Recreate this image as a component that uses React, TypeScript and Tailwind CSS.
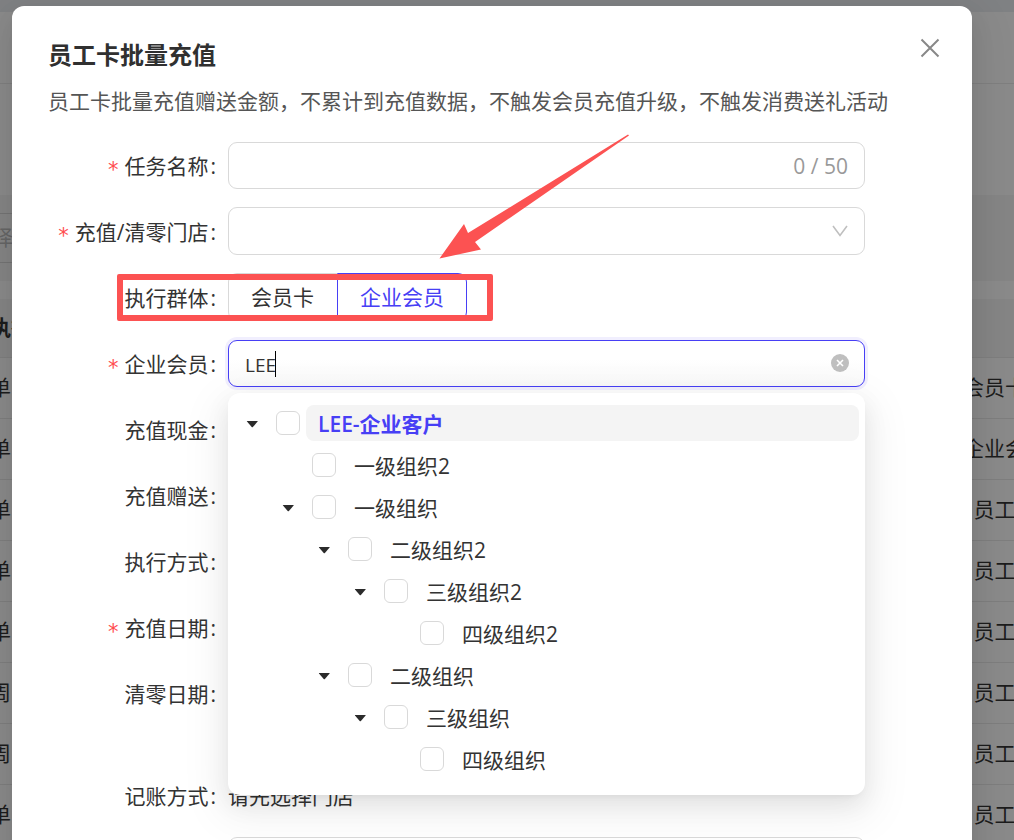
import { useState } from "react";
import type { ReactNode } from "react";

const tableRows = [
  { left: "单", right: "会员卡类" },
  { left: "单", right: "企业会员" },
  { left: "单", right: "员工卡" },
  { left: "单", right: "员工卡" },
  { left: "单", right: "员工卡" },
  { left: "周", right: "员工卡" },
  { left: "周", right: "员工卡" },
  { left: "单", right: "员工卡" },
];

const tree = [
  { label: "LEE-企业客户", level: 0, open: true, match: true },
  { label: "一级组织2", level: 1, open: false },
  { label: "一级组织", level: 1, open: true },
  { label: "二级组织2", level: 2, open: true },
  { label: "三级组织2", level: 3, open: true },
  { label: "四级组织2", level: 4, open: false },
  { label: "二级组织", level: 2, open: true },
  { label: "三级组织", level: 3, open: true },
  { label: "四级组织", level: 4, open: false },
];

const indents = ["pl-0", "pl-9", "pl-18", "pl-27", "pl-36"];

function Backdrop() {
  return (
    <div className="absolute inset-0 overflow-hidden bg-[#8a8a8a] text-[21px] text-[#1c1c1c]">
      <div className="h-3 bg-[#7f8183]" />
      <div className="h-[72px] border-b border-[#7f7f7f]" />
      <div className="h-[111px]" />
      <div className="h-[86px] bg-[#858585] pt-[18px]">
        <div className="flex h-[50px] w-24 items-center border-y border-[#747474] text-[#666]">
          <span className="-ml-2">择</span>
        </div>
      </div>
      <div className="h-[18px]" />
      <table className="w-full table-fixed border-collapse">
        <thead>
          <tr className="h-[58px] border-b border-[#7e7e7e] bg-[#858585]">
            <th className="w-24 text-left font-bold">
              <span className="-ml-2.5">执行</span>
            </th>
            <th />
            <th className="w-[18px]" />
          </tr>
        </thead>
        <tbody>
          {tableRows.map((row, i) => (
            <tr key={i} className="h-[61px] border-b border-[#7e7e7e]">
              <td className="w-24">
                <span className="-ml-2.5">{row.left}</span>
              </td>
              <td />
              <td className="w-[18px]">
                <div className="-mx-12 text-center whitespace-nowrap">{row.right}</div>
              </td>
            </tr>
          ))}
        </tbody>
      </table>
    </div>
  );
}

function Row({ label, required, id, tall, children }: { label: string; required?: boolean; id?: string; tall?: boolean; children?: ReactNode }) {
  return (
    <div className={`flex ${tall ? "h-21" : "h-12"}`}>
      <label htmlFor={id} className="flex h-12 w-45 shrink-0 items-center justify-end pt-0.5 pr-3 whitespace-nowrap">
        {required && <span className="mr-1.5 pt-2 font-['DejaVu_Sans'] text-[#ff4d4f]">*</span>}
        {label}
        <span className="ml-0.5">:</span>
      </label>
      <div className="relative flex h-12 min-w-0 flex-1 items-end">{children}</div>
    </div>
  );
}

function TreePanel() {
  return (
    <ul className="absolute inset-x-0 top-[54px] z-10 flex flex-col gap-1.5 rounded-xl bg-white px-1.5 pt-3 pb-[18px] shadow-[0_9px_24px_rgba(0,0,0,0.08),0_4px_9px_-6px_rgba(0,0,0,0.12),0_14px_42px_12px_rgba(0,0,0,0.05)]">
      {tree.map((node, i) => (
        <li key={i} className={`flex h-9 items-center ${indents[node.level]}`}>
          {node.open ? (
            <button type="button" aria-label="展开" className="flex w-9 shrink-0 justify-center pt-0.5">
              <svg width="12" height="8" viewBox="0 0 12 8" className="fill-[#2b2b2b]">
                <path d="M1.2 1h10.200q.6 0 .2.6L6.900 7q-.6.600-1.200 0L1 1.600Q.6 1 1.200 1z" />
              </svg>
            </button>
          ) : (
            <span className="w-9 shrink-0" />
          )}
          <input
            id={`node-${i}`}
            type="checkbox"
            className="ml-1.5 size-6 shrink-0 appearance-none rounded-md border border-[#d9d9d9] bg-white"
          />
          <label
            htmlFor={`node-${i}`}
            className={`ml-1.5 flex h-9 flex-1 items-center rounded-lg px-3 pt-0.5 ${node.match ? "bg-[#f4f4f4] font-semibold text-[#473ff5]" : ""}`}
          >
            {node.label}
          </label>
        </li>
      ))}
    </ul>
  );
}

export default function App() {
  const [name, setName] = useState("");
  const [member, setMember] = useState("LEE");
  const box = "w-full rounded-[9px] border border-[#d9d9d9] bg-white px-4 outline-none";
  return (
    <div className="relative h-screen overflow-hidden font-['Open_Sans','Noto_Sans_CJK_SC',sans-serif]">
      <Backdrop />
      <div className="relative pt-1.5 pr-[42px] pl-3">
        <main className="relative min-h-screen rounded-xl bg-white px-9 pt-[31px] text-[21px] leading-8 text-[#333] shadow-[0_9px_24px_rgba(0,0,0,0.08),0_4px_9px_-6px_rgba(0,0,0,0.12),0_14px_42px_12px_rgba(0,0,0,0.05)]">
          <button type="button" aria-label="关闭" className="absolute top-8 right-8">
            <svg width="20" height="20" viewBox="0 0 20 20" className="stroke-[#888]" strokeWidth="2">
              <path d="M1.5 1.5l17 17M18.5 1.5l-17 17" />
            </svg>
          </button>
          <h1 className="text-2xl leading-9 font-bold text-[#303030]">员工卡批量充值</h1>
          <p className="mt-3 text-[#555]">员工卡批量充值赠送金额，不累计到充值数据，不触发会员充值升级，不触发消费送礼活动</p>
          <form className="mt-6 flex flex-col gap-[18px] pr-[71px]">
            <Row label="任务名称" required id="name">
              <input id="name" value={name} maxLength={50} onChange={(e) => setName(e.target.value)} className={`${box} h-[47px]`} />
              <span className="absolute top-[9px] right-[17px] text-[#999]">{name.length} / 50</span>
            </Row>
            <Row label="充值/清零门店" required id="shop">
              <select id="shop" className={`${box} h-12 appearance-none`} />
              <svg width="16" height="12" viewBox="0 0 16 12" className="pointer-events-none absolute top-[18px] right-[17px] fill-none stroke-[#bfbfbf]" strokeWidth="1.6">
                <path d="M1 1l7 9.500L15 1" />
              </svg>
            </Row>
            <Row label="执行群体">
              <div className="flex h-full">
                <button type="button" className="rounded-l-[9px] border border-r-0 border-[#d9d9d9] pr-[23px] pl-[22px]">会员卡</button>
                <button type="button" className="rounded-r-[9px] border border-[#473ff5] px-[22px] text-[#473ff5]">企业会员</button>
              </div>
              <div className="absolute top-px -left-[111px] h-[47px] w-[376px] rounded-xs border-6 border-[#fc5252]" />
              <svg width="192" height="126" viewBox="0 0 192 126" className="pointer-events-none absolute -top-[139px] left-[211px] z-20 fill-[#fc5252]">
                <path d="M.5 124.500L25 90l4 9L189 .5l1 1L36 108l6 7.500z" />
              </svg>
            </Row>
            <Row label="企业会员" required id="member">
              <input
                id="member"
                value={member}
                onChange={(e) => setMember(e.target.value)}
                className="h-[47px] w-full rounded-[9px] border border-[#473ff5] bg-white bg-linear-to-b from-white from-40% to-[#f9f9f9] px-4 pt-0.5 text-[19px] shadow-[0_0_0_3px_#f1effe] outline-none"
              />
              <span className="absolute top-3 left-[47px] h-[26px] w-px bg-black" />
              <button type="button" aria-label="清除" className="absolute top-[15px] right-4">
                <svg width="18" height="18" viewBox="0 0 18 18">
                  <circle cx="9" cy="9" r="9" className="fill-[#bfbfbf]" />
                  <path d="M6 6l6 6M12 6l-6 6" className="stroke-white" strokeWidth="1.6" />
                </svg>
              </button>
              <TreePanel />
            </Row>
            <Row label="充值现金" />
            <Row label="充值赠送" />
            <Row label="执行方式" />
            <Row label="充值日期" required />
            <Row label="清零日期" tall />
            <Row label="记账方式">
              <p className="flex h-full items-center pt-0.5">请先选择门店</p>
            </Row>
            <div className="pl-45">
              <textarea aria-label="备注" className={`${box} h-24 resize-none`} />
            </div>
          </form>
        </main>
      </div>
    </div>
  );
}
